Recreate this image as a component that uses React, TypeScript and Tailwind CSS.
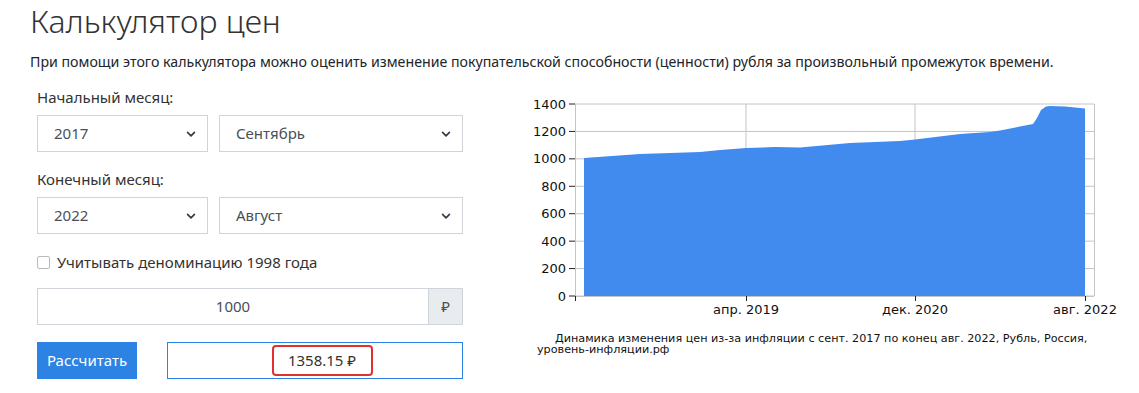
import React from "react";

const Chevron = () => (
  <svg width="10" height="10" viewBox="0 0 16 16" className="absolute right-[11px] top-1/2 -translate-y-1/2 pointer-events-none">
    <path d="M2.5 5.5l5.5 5.5 5.5-5.5" fill="none" stroke="#343a40" strokeWidth="2.6" strokeLinecap="round" strokeLinejoin="round" />
  </svg>
);

const Select = ({ value, className }: { value: string; className: string }) => (
  <div className={"relative h-[37px] border border-[#ced4da] bg-white " + className}>
    <div className="h-full flex items-center pl-[16px] text-[15px] text-[#495057]">{value}</div>
    <Chevron />
  </div>
);

const pts: [number, number][] = [
  [64, 68], [120, 64], [180, 62], [200, 60], [226, 58], [255, 57], [280, 57.5], [330, 53],
  [380, 51], [395, 49.5], [440, 44], [470, 42], [480, 40.5], [513, 34], [517, 28], [521, 20],
  [526, 16.5], [530, 16], [545, 16.5], [565, 18.5],
];

const Chart = () => {
  const yv = (v: number) => 206 - v * (192 / 1400);
  const ticks = [0, 200, 400, 600, 800, 1000, 1200, 1400];
  const area = "M64 206 " + pts.map(([x, y]) => `L${x} ${y}`).join(" ") + " L565 206 Z";
  return (
    <svg width="600" height="232" viewBox="0 0 600 232" className="block overflow-visible">
      {ticks.map((t) => (
        <g key={t}>
          <line x1="55" x2="574" y1={yv(t)} y2={yv(t)} stroke="#c4c4c4" strokeWidth="1" />
          <line x1="49" x2="55" y1={yv(t)} y2={yv(t)} stroke="#222" strokeWidth="1" />
          <text x="46" y={yv(t) + 4.5} textAnchor="end" fontSize="13" fontFamily="DejaVu Sans" fill="#111">{t}</text>
        </g>
      ))}
      <line x1="226" x2="226" y1="14" y2="206" stroke="#c4c4c4" />
      <line x1="395" x2="395" y1="14" y2="206" stroke="#c4c4c4" />
      <line x1="574.5" x2="574.5" y1="14" y2="206" stroke="#c4c4c4" />
      <line x1="55.5" x2="55.5" y1="14" y2="206" stroke="#c4c4c4" />
      <path d={area} fill="#418bee" />
      <line x1="55" x2="574" y1="206.5" y2="206.5" stroke="#c4c4c4" />
      {[55.5, 226.5, 395.5, 565.5].map((x) => (
        <line key={x} x1={x} x2={x} y1="206" y2="211" stroke="#222" />
      ))}
      <text x="226" y="224" textAnchor="middle" fontSize="13" fontFamily="DejaVu Sans" fill="#111">апр. 2019</text>
      <text x="395" y="224" textAnchor="middle" fontSize="13" fontFamily="DejaVu Sans" fill="#111">дек. 2020</text>
      <text x="565" y="224" textAnchor="middle" fontSize="13" fontFamily="DejaVu Sans" fill="#111">авг. 2022</text>
    </svg>
  );
};

export default function App() {
  return (
    <div className="w-[1139px] h-[393px] overflow-hidden bg-white pl-[30px] font-['Noto_Sans',sans-serif] text-[#212529]">
      <h1 className="text-[32px] font-light leading-[40px] pt-[1px] text-[#333]">Калькулятор цен</h1>
      <p className="mt-[10px] text-[14.2px] leading-[22px]">
        При помощи этого калькулятора можно оценить изменение покупательской способности (ценности) рубля за произвольный промежуток времени.
      </p>
      <div className="flex mt-[13px]">
        <div className="ml-[7px] w-[426px]">
          <div className="text-[15px] leading-[22px] text-[#333]">Начальный месяц:</div>
          <div className="flex gap-[11px] mt-[7px]">
            <Select value="2017" className="w-[171px]" />
            <Select value="Сентябрь" className="flex-1" />
          </div>
          <div className="text-[15px] leading-[22px] text-[#333] mt-[16px]">Конечный месяц:</div>
          <div className="flex gap-[11px] mt-[7px]">
            <Select value="2022" className="w-[171px]" />
            <Select value="Август" className="flex-1" />
          </div>
          <label className="flex items-center mt-[17px] h-[22px]">
            <span className="w-[13px] h-[13px] border border-[#bbb] rounded-[2px] bg-white" />
            <span className="ml-[7px] text-[15px] text-[#333]">Учитывать деноминацию 1998 года</span>
          </label>
          <div className="flex mt-[15px] h-[37px] border border-[#ced4da]">
            <div className="flex-1 flex items-center justify-center text-[15px] text-[#495057]">1000</div>
            <div className="w-[34px] bg-[#e9ecef] border-l border-[#ced4da] flex items-center justify-center text-[15px] text-[#495057]">₽</div>
          </div>
          <div className="flex mt-[17px] h-[37px]">
            <button className="w-[100px] h-full bg-[#2d83e3] text-white text-[15px]">Рассчитать</button>
            <div className="ml-[30px] flex-1 border border-[#2d83e3] flex items-center justify-center">
              <span className="ml-[14px] h-[31px] w-[101px] border-[2.5px] border-[#e2302f] rounded-[4px] flex items-center justify-center text-[15px] text-[#333]">1358.15 ₽</span>
            </div>
          </div>
        </div>
        <div className="ml-[57px] w-[600px] mt-[4px]">
          <Chart />
          <div className="mt-[11px] font-['DejaVu_Sans',sans-serif] text-[11.2px] leading-[11px] text-[#111]">
            <div className="pl-[35px]">Динамика изменения цен из-за инфляции с сент. 2017 по конец авг. 2022, Рубль, Россия,</div>
            <div className="pl-[17px]">уровень-инфляции.рф</div>
          </div>
        </div>
      </div>
    </div>
  );
}
